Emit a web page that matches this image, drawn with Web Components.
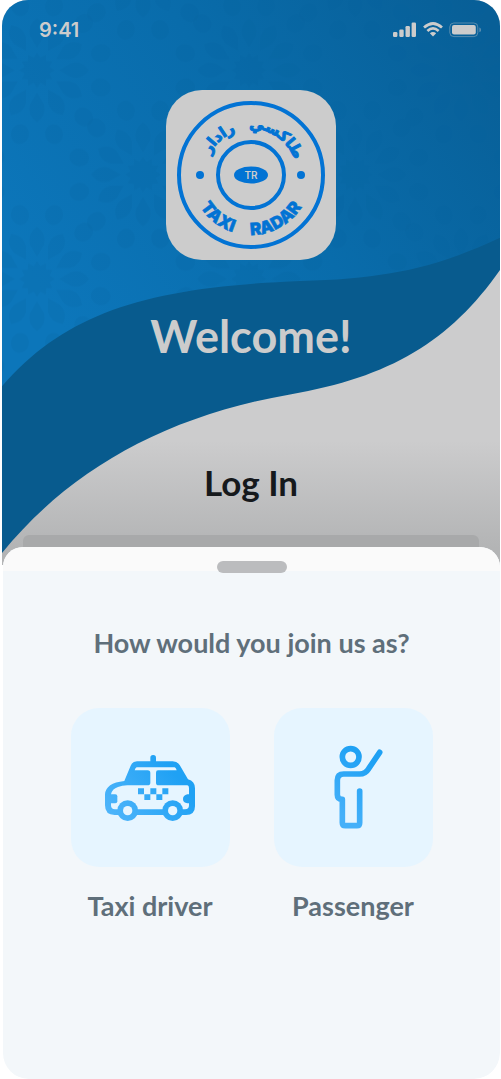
<!DOCTYPE html>
<html lang="en">
<head>
<meta charset="utf-8">
<meta name="viewport" content="width=device-width, initial-scale=1">
<title>Taxi Radar</title>
<style>
    body {
        margin: 0;
        background: #fff;
        font-family: Lato, "Open Sans", sans-serif;
    }
</style>
</head>
<body>
<taxi-app>
    <welcome-hero slot="hero" heading="Welcome!" action="Log In">
        <status-bar slot="status" time="9:41"></status-bar>
        <brand-logo slot="logo"></brand-logo>
    </welcome-hero>
    <bottom-sheet slot="sheet">
        <span slot="title">How would you join us as?</span>
        <role-card icon="taxi">Taxi driver</role-card>
        <role-card icon="passenger">Passenger</role-card>
    </bottom-sheet>
</taxi-app>

<script>
class TaxiApp extends HTMLElement {
    constructor() {
        super();
        this.attachShadow({ mode: 'open' });
        this.shadowRoot.innerHTML = `
            <style>
                :host {
                    display: flex;
                    flex-direction: column;
                    min-height: 100vh;
                    margin: 0 1px 0 2px;
                    border-radius: 26px;
                    overflow: hidden;
                }
                ::slotted([slot="sheet"]) {
                    flex: 1;
                }
            </style>
            <slot name="hero"></slot>
            <slot name="sheet"></slot>
        `;
    }
}

class StatusBar extends HTMLElement {
    constructor() {
        super();
        this.attachShadow({ mode: 'open' });
    }

    connectedCallback() {
        this.shadowRoot.innerHTML = `
            <style>
                :host {
                    display: flex;
                    align-items: center;
                    justify-content: space-between;
                    height: 60px;
                    padding: 0 19px 0 37px;
                    color: #ccc;
                    font: 600 20px/24px Inter, sans-serif;
                }
                .icons {
                    display: flex;
                    align-items: center;
                    gap: 6px;
                }
                svg {
                    display: block;
                    fill: currentColor;
                }
            </style>
            <span>${this.getAttribute('time') || ''}</span>
            <div class="icons">
                <svg width="24" height="16" viewBox="0 0 24 16" aria-hidden="true">
                    <rect x="0" y="10" width="4.4" height="5" rx="1.2"/>
                    <rect x="6.3" y="7.5" width="4.4" height="7.5" rx="1.2"/>
                    <rect x="12.5" y="4" width="4.4" height="11" rx="1.2"/>
                    <rect x="18.6" y="0.5" width="4.4" height="14.5" rx="1.2"/>
                </svg>
                <svg width="20" height="16" viewBox="0 0 20 16" aria-hidden="true">
                    <g fill="none" stroke="currentColor" stroke-width="2.7">
                        <path d="M1 5.6Q10-2.6 19 5.6"/>
                        <path d="M4.4 9Q10 3.9 15.6 9"/>
                    </g>
                    <path d="M6.8 11.3Q10 8.6 13.2 11.3L10 14.6Z"/>
                </svg>
                <svg width="32" height="16" viewBox="0 0 32 16" aria-hidden="true">
                    <rect x="0.8" y="1" width="28" height="13.6" rx="4" fill="none" stroke="currentColor" opacity=".4"/>
                    <rect x="3" y="3" width="23.8" height="9.6" rx="2"/>
                    <path d="M30.3 5.5v4.6q2-.7 2-2.3t-2-2.3Z" opacity=".4"/>
                </svg>
            </div>
        `;
    }
}

class BrandLogo extends HTMLElement {
    constructor() {
        super();
        this.attachShadow({ mode: 'open' });
        this.shadowRoot.innerHTML = `
            <style>
                :host {
                    display: block;
                    width: 170px;
                    height: 170px;
                    border-radius: 36px;
                    background: #ccc;
                }
                svg {
                    display: block;
                    width: 100%;
                    fill: #0273d4;
                }
                .ring {
                    fill: none;
                    stroke: #0273d4;
                    stroke-width: 4;
                }
                .latin {
                    font: 900 17px Inter, sans-serif;
                    stroke: #0273d4;
                    stroke-width: .5;
                }
                .arabic {
                    font: 700 15px "DejaVu Sans", sans-serif;
                    stroke: #0273d4;
                    stroke-width: 1;
                }
                .badge {
                    font: 600 10px Inter, sans-serif;
                    fill: #ccc;
                }
            </style>
            <svg viewBox="0 0 170 170">
                <defs>
                    <path id="lower" d="M25 85A60 60 0 0 0 145 85"/>
                    <path id="upper" d="M39 85A46 46 0 0 1 131 85"/>
                </defs>
                <circle class="ring" cx="85" cy="85" r="72"/>
                <circle class="ring" cx="85" cy="85" r="33"/>
                <circle cx="34" cy="85" r="4"/>
                <circle cx="135" cy="85" r="4"/>
                <ellipse cx="85" cy="85" rx="17" ry="8.5"/>
                <text class="badge" x="85" y="89" text-anchor="middle">TR</text>
                <g class="latin" text-anchor="middle">
                    <text><textPath href="#lower" startOffset="29%">TAXI</textPath></text>
                    <text><textPath href="#lower" startOffset="66%">RADAR</textPath></text>
                </g>
                <g class="arabic" text-anchor="middle">
                    <text><textPath href="#upper" startOffset="27%">رادار</textPath></text>
                    <text><textPath href="#upper" startOffset="69%">طاكسي</textPath></text>
                </g>
            </svg>
        `;
    }
}

class WelcomeHero extends HTMLElement {
    constructor() {
        super();
        this.attachShadow({ mode: 'open' });
    }

    connectedCallback() {
        this.shadowRoot.innerHTML = `
            <style>
                /* Artwork and content share the single grid cell */
                :host {
                    display: grid;
                    overflow: hidden;
                }
                .art, .content {
                    grid-area: 1 / 1;
                    min-width: 0;
                }
                .art {
                    display: block;
                    width: 100%;
                    height: 100%;
                }
                .content {
                    display: flex;
                    flex-direction: column;
                }
                .logo {
                    display: flex;
                    justify-content: center;
                    padding-top: 30px;
                }
                h1, h2 {
                    margin: 0;
                    text-align: center;
                    font-weight: 700;
                }
                h1 {
                    padding-top: 48px;
                    color: #ccc;
                    font-size: 45px;
                    line-height: 56px;
                }
                h2 {
                    padding-top: 98px;
                    color: #16191c;
                    font-size: 35px;
                    line-height: 40px;
                }
                input {
                    height: 28px;
                    margin: 33px 21px 0;
                    border: 0;
                    border-radius: 6px;
                    background: #a8a9aa;
                }
            </style>
            <svg class="art" viewBox="2 0 498 563" preserveAspectRatio="none" aria-hidden="true">
                <defs>
                    <linearGradient id="sky" x1="0" y1=".6" x2="1" y2=".1">
                        <stop offset="0" stop-color="#0c76ba"/>
                        <stop offset=".5" stop-color="#096cab"/>
                        <stop offset="1" stop-color="#085f97"/>
                    </linearGradient>
                    <linearGradient id="ground" x1="0" y1="0" x2="0" y2="1">
                        <stop offset=".78" stop-color="#cccccd"/>
                        <stop offset=".97" stop-color="#b3b4b5"/>
                    </linearGradient>
                    <g id="rosette"></g>
                    <pattern id="tiles" width="212" height="208" patternUnits="userSpaceOnUse" x="-69" y="-34">
                        <use href="#rosette" x="106" y="104"/>
                        <use href="#rosette" x="0" y="0"/>
                        <use href="#rosette" x="212" y="0"/>
                        <use href="#rosette" x="0" y="208"/>
                        <use href="#rosette" x="212" y="208"/>
                    </pattern>
                </defs>
                <rect x="2" width="498" height="563" fill="url(#ground)"/>
                <path fill="#085b8e" d="M2 551C70 468 165 415 290 393C390 376 450 340 500 269V200H2Z"/>
                <path fill="url(#sky)" d="M2 385C67 310 150 286 300 280C390 278 440 265 500 237V0H2Z"/>
                <path fill="url(#tiles)" opacity=".6" d="M2 385C67 310 150 286 300 280C390 278 440 265 500 237V0H2Z"/>
            </svg>
            <div class="content">
                <slot name="status"></slot>
                <div class="logo"><slot name="logo"></slot></div>
                <h1>${this.getAttribute('heading') || ''}</h1>
                <h2>${this.getAttribute('action') || ''}</h2>
                <input type="text" aria-label="${this.getAttribute('action') || ''}">
            </div>
        `;
        this.drawRosette();
    }

    // Twelve-fold girih rosette: spiked centre, a ring of kites, a ring of petals
    drawRosette() {
        const spikes = [];
        for (let i = 0; i < 24; i++) {
            const radius = i % 2 ? 13 : 18;
            const angle = i * Math.PI / 12;
            spikes.push(`${(radius * Math.cos(angle)).toFixed(1)},${(radius * Math.sin(angle)).toFixed(1)}`);
        }
        let markup = `<polygon points="${spikes.join(' ')}"/>`;
        for (let i = 0; i < 12; i++) {
            markup += `<path transform="rotate(${i * 30})" d="M22 0L34-7Q45-10 52 0Q45 10 34 7Z"/>`;
            markup += `<ellipse transform="rotate(${i * 30 + 15})" cx="66" rx="10" ry="9"/>`;
        }
        const rosette = this.shadowRoot.getElementById('rosette');
        rosette.setAttribute('fill', '#05609c');
        rosette.setAttribute('fill-opacity', '.25');
        rosette.innerHTML = markup;
    }
}

class BottomSheet extends HTMLElement {
    constructor() {
        super();
        this.attachShadow({ mode: 'open' });
        this.shadowRoot.innerHTML = `
            <style>
                :host {
                    display: block;
                    margin: -18px 0 0 1px;
                    border-radius: 20px 20px 26px 26px;
                    background: #f3f7fa;
                    overflow: hidden;
                    z-index: 1;
                }
                .grip {
                    display: flex;
                    justify-content: center;
                    padding-top: 14px;
                    height: 10px;
                    background: #fafafa;
                }
                .grip::before {
                    content: "";
                    flex: none;
                    width: 70px;
                    height: 12px;
                    border-radius: 6px;
                    background: #bbbcbe;
                }
                h3 {
                    margin: 0;
                    padding-top: 54px;
                    text-align: center;
                    color: #5f6f7a;
                    font-size: 27px;
                    line-height: 36px;
                    font-weight: 700;
                }
                .roles {
                    display: flex;
                    justify-content: center;
                    gap: 44px;
                    padding: 47px 16px 40px;
                }
            </style>
            <div class="grip"></div>
            <h3><slot name="title"></slot></h3>
            <div class="roles"><slot></slot></div>
        `;
    }
}

const ROLE_ICONS = {
    taxi: `
        <svg width="90" height="70" viewBox="45 36 270 210" aria-hidden="true">
            <defs>
                <linearGradient id="g" gradientUnits="userSpaceOnUse" x1="70" y1="230" x2="250" y2="90">
                    <stop offset="0" stop-color="#4db4fa"/>
                    <stop offset="1" stop-color="#1fa1f4"/>
                </linearGradient>
            </defs>
            <g fill="url(#g)">
                <rect x="181" y="42" width="17" height="30" rx="8"/>
                <path d="M45 160Q47 126 103 120L122 74Q127 61 141 61H248Q262 61 269 72L294 115Q315 121 315 142V196Q315 222 288 222H74Q45 222 45 193Z"/>
            </g>
            <g fill="#e6f5ff">
                <path d="M140 79H254Q258 81 260 88H204Q198 88 198 95V125Q198 133 206 133H292Q297 134 297 141V193Q297 205 285 205H75Q63 205 63 193V160Q66 144 84 138Q96 133 112 133H172Q181 133 181 125V96Q181 88 173 88H134Q136 80 140 79Z"/>
            </g>
            <g fill="url(#g)">
                <path d="M60 160H76Q82 160 82 166V181Q82 187 76 187H60Z"/>
                <path d="M300 160H292Q279 163 279 174T292 187H300Z"/>
                <path d="M144 142h18v18h-18zM181 142h18v18h-18zM217 142h18v18h-18zM163 160h18v17h-18zM199 160h18v17h-18z"/>
                <circle cx="113" cy="209" r="31"/>
                <circle cx="248" cy="209" r="31"/>
            </g>
            <g fill="#e6f5ff">
                <circle cx="113" cy="209" r="14"/>
                <circle cx="248" cy="209" r="14"/>
            </g>
        </svg>`,
    passenger: `
        <svg width="60" height="86" viewBox="39 43 180 258" aria-hidden="true">
            <defs>
                <linearGradient id="g" gradientUnits="userSpaceOnUse" x1="80" y1="240" x2="190" y2="100">
                    <stop offset="0" stop-color="#45b0f9"/>
                    <stop offset="1" stop-color="#1fa1f4"/>
                </linearGradient>
            </defs>
            <g fill="none" stroke="url(#g)" stroke-width="17" stroke-linecap="round" stroke-linejoin="round">
                <circle cx="122" cy="79" r="25"/>
                <path d="M209 65L176 114Q166 130 149 130H101Q82 130 82 149V192Q82 206 97 206V276Q97 285 106 285H141Q149 285 149 276V181"/>
            </g>
        </svg>`
};

class RoleCard extends HTMLElement {
    constructor() {
        super();
        this.attachShadow({ mode: 'open' });
    }

    connectedCallback() {
        this.shadowRoot.innerHTML = `
            <style>
                :host {
                    display: block;
                }
                button {
                    display: flex;
                    flex-direction: column;
                    align-items: center;
                    gap: 21px;
                    padding: 0;
                    border: 0;
                    background: none;
                    color: #5f6f7a;
                    font: inherit;
                    font-size: 27px;
                    line-height: 36px;
                    font-weight: 700;
                    cursor: pointer;
                }
                .tile {
                    display: grid;
                    place-items: center;
                    width: 159px;
                    height: 159px;
                    border-radius: 28px;
                    background: #e6f5ff;
                }
                svg {
                    display: block;
                }
            </style>
            <button type="button">
                <span class="tile">${ROLE_ICONS[this.getAttribute('icon')] || ''}</span>
                <span><slot></slot></span>
            </button>
        `;
    }
}

customElements.define('taxi-app', TaxiApp);
customElements.define('status-bar', StatusBar);
customElements.define('brand-logo', BrandLogo);
customElements.define('welcome-hero', WelcomeHero);
customElements.define('bottom-sheet', BottomSheet);
customElements.define('role-card', RoleCard);
</script>
</body>
</html>
